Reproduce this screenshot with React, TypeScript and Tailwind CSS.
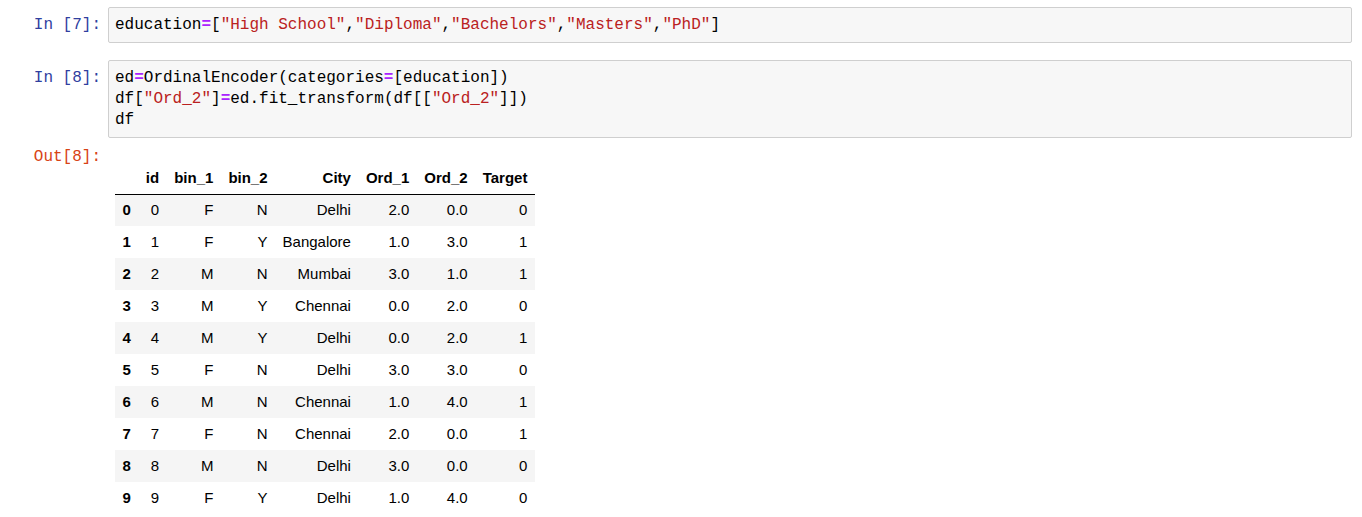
const mono = "font-['Liberation_Mono','DejaVu_Sans_Mono',monospace] text-[16px] leading-[21px]";

const Op = ({ children }: { children: string }) => (
  <span className="text-[#aa22ff] font-bold">{children}</span>
);
const Str = ({ children }: { children: string }) => (
  <span className="text-[#ba2121]">{children}</span>
);

const rows = [
  [0, "F", "N", "Delhi", "2.0", "0.0", 0],
  [1, "F", "Y", "Bangalore", "1.0", "3.0", 1],
  [2, "M", "N", "Mumbai", "3.0", "1.0", 1],
  [3, "M", "Y", "Chennai", "0.0", "2.0", 0],
  [4, "M", "Y", "Delhi", "0.0", "2.0", 1],
  [5, "F", "N", "Delhi", "3.0", "3.0", 0],
  [6, "M", "N", "Chennai", "1.0", "4.0", 1],
  [7, "F", "N", "Chennai", "2.0", "0.0", 1],
  [8, "M", "N", "Delhi", "3.0", "0.0", 0],
  [9, "F", "Y", "Delhi", "1.0", "4.0", 0],
];

const headers = ["", "id", "bin_1", "bin_2", "City", "Ord_1", "Ord_2", "Target"];

const Prompt = ({ label, out }: { label: string; out?: boolean }) => (
  <div
    className={`${mono} w-[108px] shrink-0 pr-[7px] text-right ${
      out ? "text-[#d84315]" : "text-[#303f9f]"
    }`}
  >
    {label}
  </div>
);

const CodeCell = ({ n, children }: { n: number; children: React.ReactNode }) => (
  <div className="flex">
    <div className="pt-[8px]">
      <Prompt label={`In [${n}]:`} />
    </div>
    <div
      className={`${mono} flex-1 rounded-[2px] border border-[#cfcfcf] bg-[#f7f7f7] pl-[6px] pt-[7px] pb-[6px] text-black whitespace-pre`}
    >
      {children}
    </div>
  </div>
);

export default function App() {
  return (
    <div className="w-[1362px] h-[517px] overflow-hidden bg-white pt-[7px] pr-[10px]">
      <CodeCell n={7}>
        education<Op>=</Op>[<Str>"High School"</Str>,<Str>"Diploma"</Str>,
        <Str>"Bachelors"</Str>,<Str>"Masters"</Str>,<Str>"PhD"</Str>]
      </CodeCell>
      <div className="mt-[17px]">
        <CodeCell n={8}>
          <div>
            ed<Op>=</Op>OrdinalEncoder(categories<Op>=</Op>[education])
          </div>
          <div>
            df[<Str>"Ord_2"</Str>]<Op>=</Op>ed.fit_transform(df[[<Str>"Ord_2"</Str>]])
          </div>
          <div>df</div>
        </CodeCell>
      </div>
      <div className="flex mt-[9px]">
        <Prompt label="Out[8]:" out />
        <div className="pt-[15px] pl-[7px]">
          <table className="border-collapse font-['Liberation_Sans',Arial,sans-serif] text-[15px] text-black">
            <thead className="border-b border-black">
              <tr className="h-[32px]">
                {headers.map((h, i) => (
                  <th key={i} className="px-[7.5px] py-0 text-right font-bold">
                    {h}
                  </th>
                ))}
              </tr>
            </thead>
            <tbody>
              {rows.map((r, i) => (
                <tr key={i} className={`h-[32px] ${i % 2 === 0 ? "bg-[#f5f5f5]" : ""}`}>
                  <th className="px-[7.5px] py-0 text-right font-bold">{i}</th>
                  {r.map((c, j) => (
                    <td key={j} className="px-[7.5px] py-0 text-right">
                      {c}
                    </td>
                  ))}
                </tr>
              ))}
            </tbody>
          </table>
        </div>
      </div>
    </div>
  );
}
